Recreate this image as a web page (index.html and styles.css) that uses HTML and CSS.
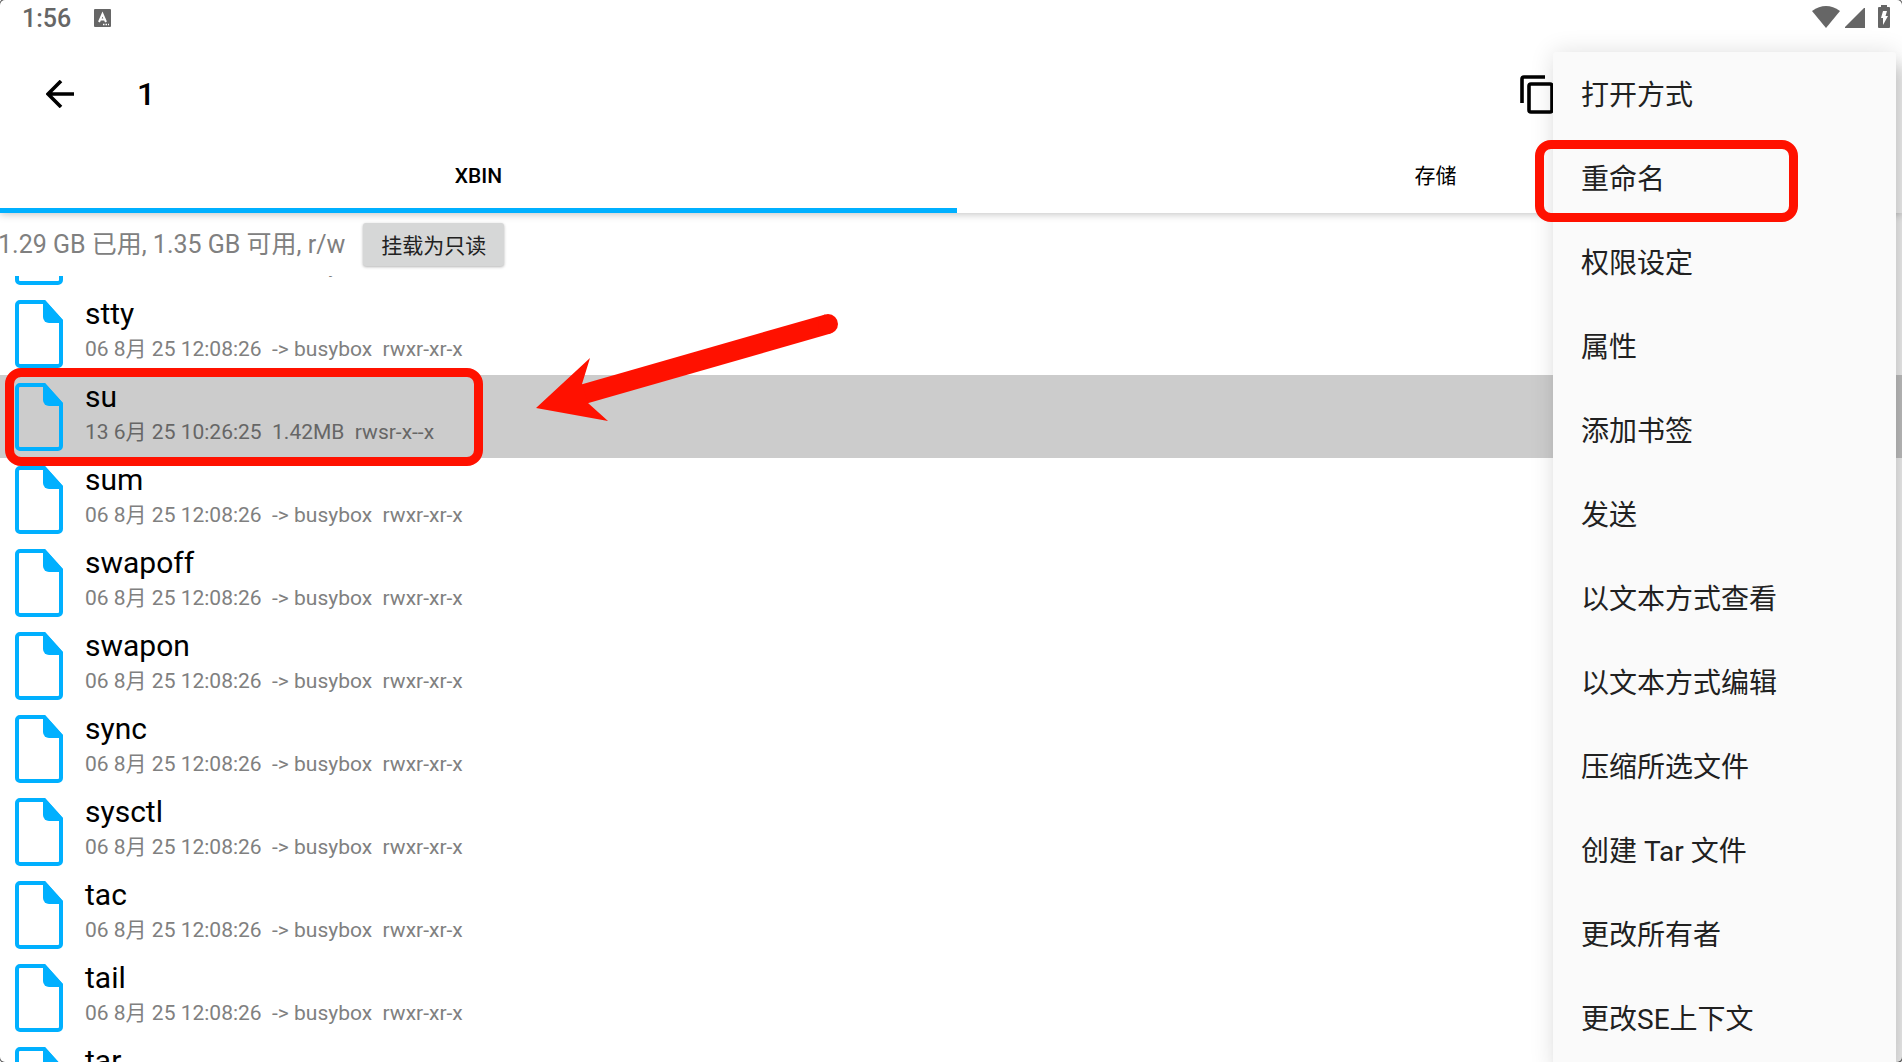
FILE: index.html
```html
<!DOCTYPE html>
<html lang="zh-CN">
<head>
  <meta charset="UTF-8" />
  <meta name="viewport" content="width=device-width, initial-scale=1" />
  <title>xbin</title>
  <link rel="stylesheet" href="styles.css">
</head>
<body>

  <svg class="defs" aria-hidden="true">
    <symbol id="file" viewBox="0 0 48 68">
      <path d="M5 2H29L46 21V63a3 3 0 0 1-3 3H5a3 3 0 0 1-3-3V5a3 3 0 0 1 3-3Z" fill="none" stroke="#00b0ff" stroke-width="4" />
      <path d="M28 0H30L48 20V23H34a6 6 0 0 1-6-6Z" fill="#00b0ff" />
    </symbol>
  </svg>

  <header class="header">
    <div class="statusbar">
      <span class="clock">1:56</span>
      <svg class="notice" width="17" height="18" viewBox="0 0 17 18">
        <rect width="17" height="18" rx="1" fill="#666" />
        <path d="M5 13L8.500 5L12 13M6 10.500H11" fill="none" stroke="#fff" stroke-width="2" />
        <path d="M9 15.500H15" stroke="#fff" stroke-width="1.500" stroke-dasharray="1.500 1" />
      </svg>
      <div class="system">
        <svg width="28" height="22" viewBox="0 0 28 22"><path d="M0 5Q14-5 28 5L14 22Z" fill="#666" /></svg>
        <svg width="20" height="20" viewBox="0 0 20 20"><path d="M19 0h1v20H0v-1Z" fill="#666" /></svg>
        <svg class="battery" width="12" height="23" viewBox="0 0 12 23">
          <path d="M3 0H9V2H11a1 1 0 0 1 1 1V22a1 1 0 0 1-1 1H1a1 1 0 0 1-1-1V3a1 1 0 0 1 1-1H3Z" fill="#666" />
          <path d="M5 6H9L7.500 11H10L5 20V13H3Z" fill="#fff" />
        </svg>
      </div>
    </div>

    <div class="toolbar">
      <button type="button" class="icon-btn" aria-label="返回">
        <svg width="28" height="28" viewBox="0 0 28 28"><path d="M28 14H3M15 1L2 14L15 27" fill="none" stroke="#000" stroke-width="3.600" /></svg>
      </button>
      <h1 class="count">1</h1>
      <button type="button" class="icon-btn copy" aria-label="复制">
        <svg width="34" height="39" viewBox="0 0 34 39">
          <path d="M2 28V4a2 2 0 0 1 2-2H25" fill="none" stroke="#000" stroke-width="3.600" />
          <rect x="9" y="9" width="23" height="28" rx="2" fill="none" stroke="#000" stroke-width="3.600" />
        </svg>
      </button>
    </div>

    <nav class="tabs">
      <a href="#xbin" class="tab active">XBIN</a>
      <a href="#storage" class="tab">存储</a>
    </nav>
  </header>

  <section class="mount">
    <span>1.29 GB 已用, 1.35 GB 可用, r/w</span>
    <button type="button" class="mount-btn">挂载为只读</button>
  </section>

  <main class="files">
    <ul class="list" id="list"></ul>
  </main>

  <svg class="arrow" width="304" height="110" viewBox="0 0 304 110" aria-hidden="true">
    <path d="M48 81L292 11" fill="none" stroke="#ff1100" stroke-width="20" />
    <circle cx="292" cy="11" r="10" fill="#ff1100" />
    <path d="M0 95L54 45L46 71L52 90L72 108Z" fill="#ff1100" />
  </svg>

  <div class="menu" role="menu">
    <button type="button" role="menuitem">打开方式</button>
    <button type="button" role="menuitem" class="marked">重命名</button>
    <button type="button" role="menuitem">权限设定</button>
    <button type="button" role="menuitem">属性</button>
    <button type="button" role="menuitem">添加书签</button>
    <button type="button" role="menuitem">发送</button>
    <button type="button" role="menuitem">以文本方式查看</button>
    <button type="button" role="menuitem">以文本方式编辑</button>
    <button type="button" role="menuitem">压缩所选文件</button>
    <button type="button" role="menuitem">创建 Tar 文件</button>
    <button type="button" role="menuitem">更改所有者</button>
    <button type="button" role="menuitem">更改SE上下文</button>
  </div>

  <script src="script.js"></script>
</body>
</html>
```
FILE: styles.css
```css
*,
*::before,
*::after {
  box-sizing: border-box;
}
body {
  margin: 0;
  height: 100vh;
  display: flex;
  flex-direction: column;
  position: relative;
  overflow: hidden;
  background: #fff;
  color: #000;
  font-family: Roboto, "Noto Sans CJK SC", sans-serif;
}
/* rounded window edge */
body::after {
  content: "";
  position: absolute;
  inset: 0;
  border-radius: 5px;
  box-shadow: 0 0 0 1px #555;
  pointer-events: none;
}
button {
  font-family: inherit;
  border: none;
  background: none;
  padding: 0;
  cursor: pointer;
}
svg {
  display: block;
}
.defs {
  position: absolute;
  width: 0;
  height: 0;
}

/* header */
.header {
  position: relative;
  box-shadow: 0 1px 8px rgba(0, 0, 0, 0.25);
}
.statusbar {
  display: flex;
  align-items: center;
  height: 36px;
  padding: 0 12px 0 22px;
  color: #666;
}
.clock {
  font-size: 25px;
  font-weight: 500;
}
.notice {
  margin-left: 23px;
}
.system {
  display: flex;
  align-items: flex-end;
  gap: 5px;
  margin-left: auto;
  margin-bottom: 4px;
}
.battery {
  margin-left: 8px;
}
.toolbar {
  display: flex;
  align-items: center;
  height: 116px;
  padding: 0 348px 0 46px;
}
.count {
  margin: 0 0 0 63px;
  font-size: 32px;
  font-weight: 500;
}
.copy {
  margin-left: auto;
}
.tabs {
  display: flex;
  height: 61px;
  overflow: hidden;
}
.tab {
  flex: 0 0 calc(50% + 6px);
  height: 61px;
  padding-top: 12px;
  line-height: 24px;
  border-bottom: 5px solid transparent;
  text-align: center;
  font-size: 21px;
  font-weight: 400;
  color: #000;
  text-decoration: none;
}
.tab.active {
  border-color: #00b0ff;
  font-weight: 500;
}

/* storage info */
.mount {
  display: flex;
  align-items: center;
  gap: 18px;
  height: 63px;
  margin-left: -2px;
  font-size: 25px;
  line-height: 30px;
  color: #808080;
}
.mount-btn {
  height: 43px;
  padding: 0 18px 2px;
  border-radius: 3px;
  background: #d6d7d7;
  box-shadow: 0 1px 3px rgba(0, 0, 0, 0.3);
  font-size: 21px;
  color: #212121;
}

/* file list, scrolled part way into the first row */
.files {
  flex: 1;
  min-height: 0;
  overflow: hidden;
}
.list {
  list-style: none;
  margin: -67px 0 0;
  padding: 0;
}
.row {
  display: flex;
  align-items: flex-start;
  gap: 22px;
  height: 83px;
  padding: 8px 15px;
  position: relative;
}
.row.selected {
  background: #ccc;
  z-index: 1;
}
.name {
  font-size: 30px;
  line-height: 34px;
  margin-top: -3px;
}
.meta {
  font-size: 21px;
  line-height: 36px;
  color: #808080;
  white-space: pre;
}
.selected .meta {
  color: #666;
}

/* red marks */
.selected::after,
.marked::after {
  content: "";
  position: absolute;
  border: 9px solid #ff1100;
  border-radius: 16px;
}
.selected::after {
  left: 5px;
  top: -7px;
  width: 478px;
  height: 98px;
}
.marked::after {
  left: -18px;
  top: 4px;
  width: 263px;
  height: 82px;
}
.arrow {
  position: absolute;
  left: 536px;
  top: 313px;
  z-index: 1;
}

/* popup menu */
.menu {
  position: absolute;
  top: 52px;
  right: 6px;
  bottom: -10px;
  z-index: 2;
  width: 343px;
  background: #fafafa;
  border-radius: 3px;
  box-shadow: 0 0 24px rgba(0, 0, 0, 0.12), 10px 14px 16px rgba(0, 0, 0, 0.15);
}
.menu button {
  position: relative;
  display: block;
  width: 100%;
  height: 84px;
  padding: 0 28px 2px;
  text-align: left;
  font-size: 28px;
  color: #212121;
}
```
FILE: script.js
```js
const link = '06 8月 25 12:08:26  -> busybox  rwxr-xr-x';

const files = [
  { name: 'strings', meta: link },
  { name: 'stty', meta: link },
  { name: 'su', meta: '13 6月 25 10:26:25  1.42MB  rwsr-x--x', selected: true },
  { name: 'sum', meta: link },
  { name: 'swapoff', meta: link },
  { name: 'swapon', meta: link },
  { name: 'sync', meta: link },
  { name: 'sysctl', meta: link },
  { name: 'tac', meta: link },
  { name: 'tail', meta: link },
  { name: 'tar', meta: link }
];

document.getElementById('list').innerHTML = files.map(f => `
  <li class="row${f.selected ? ' selected' : ''}">
    <svg width="48" height="68" aria-hidden="true"><use href="#file" /></svg>
    <div>
      <div class="name">${f.name}</div>
      <div class="meta">${f.meta.replace('>', '&gt;')}</div>
    </div>
  </li>`).join('');
```
